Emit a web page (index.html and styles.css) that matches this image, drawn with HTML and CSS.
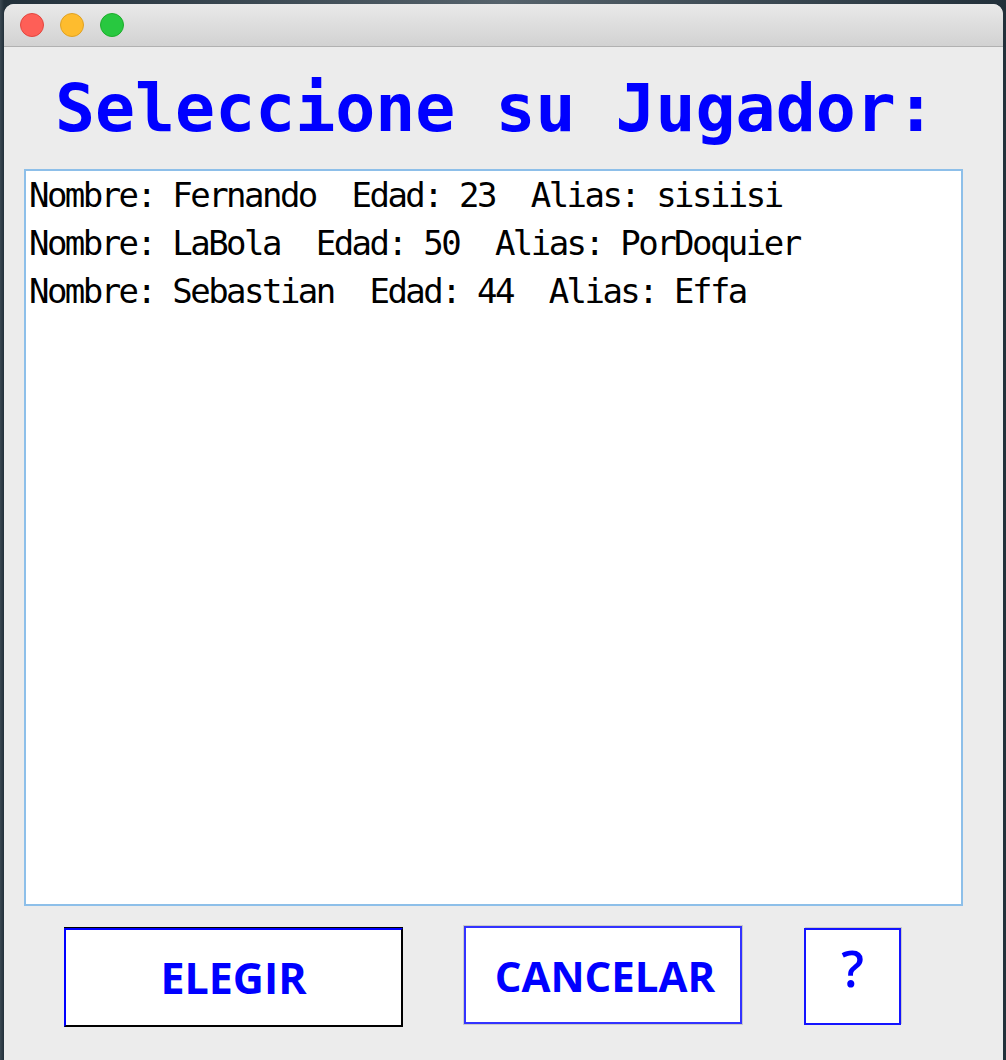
FILE: index.html
```html
<!DOCTYPE html>
<html lang="es">
  <head>
    <meta charset="UTF-8" />
    <title>Seleccione su Jugador</title>
    <link rel="stylesheet" href="styles.css">
  </head>
  <body>
    <div class="window">
      <div class="titlebar">
        <span class="light red"></span>
        <span class="light yellow"></span>
        <span class="light green"></span>
      </div>

      <div class="content">
        <h1 class="title">Seleccione su Jugador:</h1>

        <ul class="players">
          <li>Nombre: Fernando  Edad: 23  Alias: sisiisi</li>
          <li>Nombre: LaBola  Edad: 50  Alias: PorDoquier</li>
          <li>Nombre: Sebastian  Edad: 44  Alias: Effa</li>
        </ul>

        <div class="actions">
          <button class="btn btn-elegir">ELEGIR</button>
          <button class="btn btn-cancelar">CANCELAR</button>
          <button class="btn btn-help">?</button>
        </div>
      </div>
    </div>
  </body>
</html>
```

FILE: styles.css
```css
* {
  margin: 0;
  padding: 0;
  box-sizing: border-box;
}
html,
body {
  width: 100%;
  height: 100%;
  overflow: hidden;
}
body {
  background: linear-gradient(90deg, #3b4852 0, #22303a 4px, #55626b 50%, #22303a 100%);
  padding: 4px 2px 0 4px;
}

/* WINDOW */
.window {
  width: 999px;
  height: 1080px;
  background: #ececec;
  border-radius: 10px 10px 0 0;
  overflow: hidden;
}
.titlebar {
  height: 43px;
  display: flex;
  align-items: center;
  gap: 16px;
  padding-left: 16px;
  padding-bottom: 1px;
  background: linear-gradient(#e9e9e9, #d2d2d2);
  border-bottom: 1px solid #b1b1b1;
}
.light {
  width: 24px;
  height: 24px;
  border-radius: 50%;
}
.light.red {
  background: #fe5f57;
  border: 1px solid #e2463f;
}
.light.yellow {
  background: #febc2e;
  border: 1px solid #dfa123;
}
.light.green {
  background: #28c840;
  border: 1px solid #1dad2b;
}

/* CONTENT */
.content {
  padding: 21px 0 0 20px;
}
.title {
  font-family: "DejaVu Sans Mono", monospace;
  font-weight: bold;
  font-size: 66.5px;
  line-height: 80px;
  color: #0000ff;
  padding-left: 31px;
  white-space: pre;
}
.players {
  list-style: none;
  margin-top: 21px;
  width: 939px;
  height: 737px;
  background: #fff;
  border: 2px solid #8dbfe9;
  padding-left: 3px;
}
.players li {
  font-family: "DejaVu Sans Mono", monospace;
  font-size: 34px;
  letter-spacing: -2.55px;
  line-height: 48px;
  color: #000;
  white-space: pre;
}

/* BUTTONS */
.actions {
  display: flex;
  align-items: flex-start;
  padding: 20px 0 0 40px;
}
.btn {
  background: #fff;
  color: #0000ff;
  font-family: "Open Sans", sans-serif;
  font-weight: bold;
  font-size: 43px;
}
.btn-elegir {
  width: 339px;
  height: 99px;
  margin-top: 2px;
  border: 2px solid;
  border-color: #0000ff #000 #000 #0000ff;
  box-shadow: 0 -1px 0 #000;
}
.btn-cancelar {
  width: 278px;
  height: 98px;
  margin-left: 61px;
  padding-left: 4px;
  font-size: 42px;
  border: 2px solid #3333ff;
  box-shadow: 0 0 0 1px #cacaca;
}
.btn-help {
  width: 97px;
  height: 97px;
  margin-left: 62px;
  margin-top: 2px;
  padding-bottom: 17px;
  font-size: 50px;
  font-weight: 600;
  border: 2px solid #1414ff;
  box-shadow: 1px -1px 0 #cacaca;
}
```
